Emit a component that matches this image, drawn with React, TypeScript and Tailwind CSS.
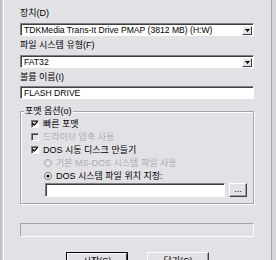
import React from "react";

const font = {
  fontFamily: '"Liberation Sans", "Noto Sans CJK KR", sans-serif',
};

const Combo: React.FC<{ value: string }> = ({ value }) => (
  <div className="shrink-0 h-[13px] w-[234px] flex items-center bg-white border border-t-[#808080] border-l-[#808080] border-b-white border-r-white shadow-[inset_1px_1px_0_#404040]">
    <span className="flex-1 pl-[3px] pt-[1px] text-[8.6px] leading-[10px] whitespace-nowrap overflow-hidden">
      {value}
    </span>
    <div className="mr-[1px] mt-[1px] h-[9px] w-[10px] flex items-center justify-center bg-[#e2e1e6] border border-t-white border-l-white border-b-[#404040] border-r-[#404040]">
      <svg width="5" height="3" viewBox="0 0 5 3">
        <path d="M0 0h5L2.5 3z" fill="#000" />
      </svg>
    </div>
  </div>
);

const TextBox: React.FC<{ value: string; width: string }> = ({ value, width }) => (
  <div
    className={`${width} shrink-0 h-[13px] flex items-center bg-white border border-t-[#808080] border-l-[#808080] border-b-white border-r-white shadow-[inset_1px_1px_0_#404040]`}
  >
    <span className="pl-[3px] pt-[1px] text-[8.6px] leading-[10px] whitespace-nowrap">
      {value}
    </span>
  </div>
);

const Check: React.FC<{ checked?: boolean; disabled?: boolean; label: string }> = ({
  checked,
  disabled,
  label,
}) => (
  <div className="h-[13px] flex items-center pl-[10px]">
    <div
      className={`w-[8px] h-[8px] flex items-center justify-center border border-t-[#808080] border-l-[#808080] border-b-white border-r-white shadow-[inset_1px_1px_0_#404040] ${
        disabled ? "bg-[#e2e1e6]" : "bg-white"
      }`}
    >
      {checked && (
        <svg width="6" height="5" viewBox="0 0 6 5">
          <path d="M0.5 2.2L2.2 4L5.5 0.6" stroke="#000" strokeWidth="1.3" fill="none" />
        </svg>
      )}
    </div>
    <span
      className={`ml-[4px] text-[9px] leading-[10px] whitespace-nowrap ${
        disabled ? "text-[#adacb1]" : "text-black"
      }`}
    >
      {label}
    </span>
  </div>
);

const Radio: React.FC<{ checked?: boolean; disabled?: boolean; label: string }> = ({
  checked,
  disabled,
  label,
}) => (
  <div className="h-[13px] flex items-center pl-[23px]">
    <svg width="8" height="8" viewBox="0 0 8 8">
      <circle
        cx="4"
        cy="4"
        r="3.5"
        fill={disabled ? "#e2e1e6" : "#fff"}
        stroke={disabled ? "#a5a4a9" : "#6b6b6b"}
      />
      {checked && <circle cx="4" cy="4" r="1.6" fill="#000" />}
    </svg>
    <span
      className={`ml-[4px] text-[9px] leading-[10px] whitespace-nowrap ${
        disabled ? "text-[#adacb1]" : "text-black"
      }`}
    >
      {label}
    </span>
  </div>
);

const Label: React.FC<{ text: string; className?: string }> = ({ text, className }) => (
  <div className={`shrink-0 h-[10px] text-[9px] leading-[10px] whitespace-nowrap ${className ?? ""}`}>
    {text}
  </div>
);

export default function App() {
  return (
    <div
      className="w-[276px] h-[260px] overflow-hidden flex bg-[#e2e1e6] text-black"
      style={font}
    >
      <div className="w-[4px] bg-gradient-to-r from-[#bdbcc1] to-[#d2d1d6] border-r border-white" />
      <div className="flex-1 pl-[16px] flex flex-col">
        <Label text="장치(D)" className="mt-[8px]" />
        <div className="shrink-0 mt-[5px]">
          <Combo value="TDKMedia Trans-It Drive PMAP (3812 MB) (H:W)" />
        </div>
        <Label text="파일 시스템 유형(F)" className="mt-[4px]" />
        <div className="shrink-0 mt-[5px]">
          <Combo value="FAT32" />
        </div>
        <Label text="볼륨 이름(I)" className="mt-[4px]" />
        <div className="shrink-0 mt-[4px]">
          <TextBox value="FLASH DRIVE" width="w-[234px]" />
        </div>

        <div className="relative shrink-0 mt-[12px] w-[234px] h-[93px] border border-[#a4a3a8] shadow-[inset_1px_1px_0_#fff,1px_1px_0_#fff] pt-[5px]">
          <span className="absolute left-[3px] -top-[6px] px-[1px] bg-[#e2e1e6] text-[9px] leading-[10px]">
            포맷 옵션(o)
          </span>
          <Check checked label="빠른 포맷" />
          <Check disabled label="드라이브 압축 사용" />
          <Check checked label="DOS 시동 디스크 만들기" />
          <Radio disabled label="기본 MS-DOS 시스템 파일 사용" />
          <Radio checked label="DOS 시스템 파일 위치 지정:" />
          <div className="flex items-center mt-[1px] pl-[24px]">
            <div className="h-[14px] flex">
              <TextBox value="" width="w-[180px] !h-[14px]" />
            </div>
            <div className="ml-[4px] w-[18px] h-[14px] flex items-center justify-center bg-[#e2e1e6] border border-t-white border-l-white border-b-[#404040] border-r-[#404040] shadow-[inset_-1px_-1px_0_#a0a0a0] text-[9px] leading-[8px] pb-[2px]">
              ...
            </div>
          </div>
        </div>

        <div className="shrink-0 mt-[19px] w-[234px] h-[14px] border border-t-[#a4a3a8] border-l-[#a4a3a8] border-b-white border-r-white" />

        <div className="shrink-0 mt-[15px] w-[234px] flex justify-center gap-[19px] pl-[1px]">
          <div className="w-[62px] h-[20px] border border-black flex justify-center">
            <div className="w-full h-full border border-t-white border-l-white border-b-[#404040] border-r-[#404040] text-[9px] leading-[10px] text-center pt-[2px]">
              시작(S)
            </div>
          </div>
          <div className="w-[62px] h-[20px] border border-t-white border-l-white border-b-[#404040] border-r-[#404040] shadow-[inset_-1px_-1px_0_#a0a0a0] text-[9px] leading-[10px] text-center pt-[3px]">
            닫기(C)
          </div>
        </div>
      </div>
      <div className="w-[5px] bg-[#d6d5da] border-l border-[#a8a7ac]" />
    </div>
  );
}
